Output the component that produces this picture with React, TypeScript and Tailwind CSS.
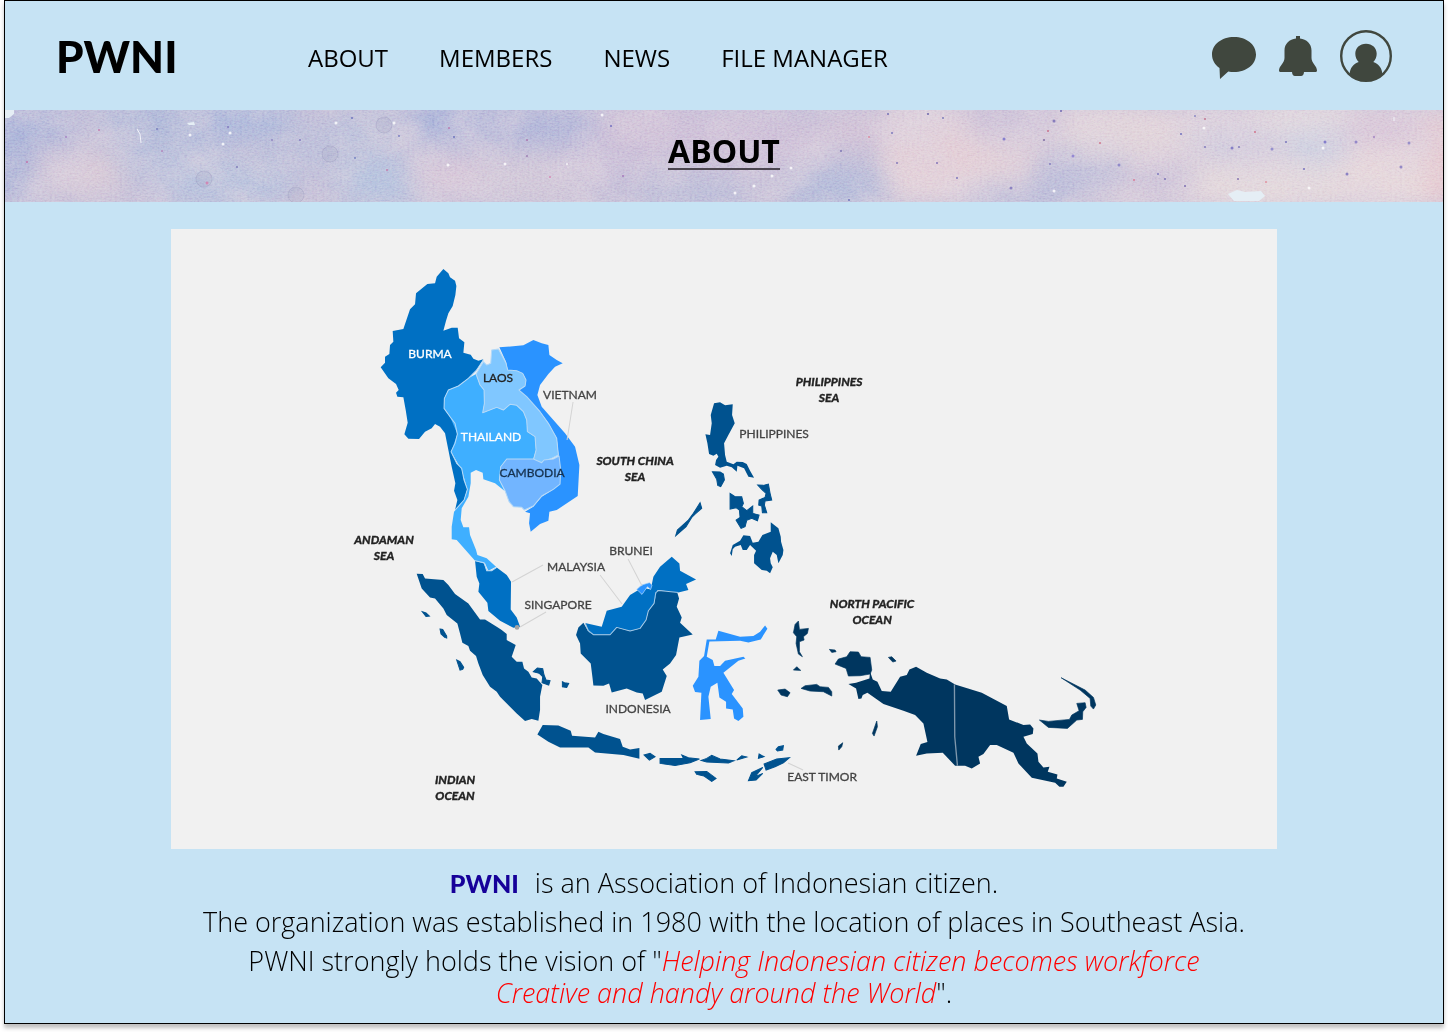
const labels: [string, number, number, string][] = [
  ['BURMA', 430, 358, '#ffffff'],
  ['LAOS', 498, 382, '#222222'],
  ['VIETNAM', 570, 399, '#444444'],
  ['THAILAND', 491, 441, '#ffffff'],
  ['CAMBODIA', 532, 477, '#16324f'],
  ['PHILIPPINES', 774, 438, '#444444'],
  ['BRUNEI', 631, 555, '#444444'],
  ['MALAYSIA', 576, 571, '#444444'],
  ['SINGAPORE', 558, 609, '#444444'],
  ['INDONESIA', 638, 713, '#444444'],
  ['EAST TIMOR', 822, 781, '#444444'],
];

const seas: [string, string, number, number][] = [
  ['PHILIPPINES', 'SEA', 829, 386],
  ['SOUTH CHINA', 'SEA', 635, 465],
  ['ANDAMAN', 'SEA', 384, 544],
  ['NORTH PACIFIC', 'OCEAN', 872, 608],
  ['INDIAN', 'OCEAN', 455, 784],
];

function SoutheastAsiaMap() {
  return (
    <svg viewBox="171 229 1106 620" className="mx-auto block h-auto w-10/13 bg-[#f1f1f1]" role="img" aria-label="Map of Southeast Asia">
      <g transform="translate(340 250) scale(.33333)" stroke="#b5d9f7" strokeWidth="3" strokeLinejoin="round">
        <path fill="#2a93ff" stroke="none" d="M478 292L550 286L580 270L605 280L625 285L628 315L650 330L668 340L645 350L625 372L600 405L592 435L605 470L640 510L675 550L705 590L718 645L713 738L650 780L628 785L625 812L600 822L572 845L567 820L570 790L555 785L580 770L605 740L640 718L660 700L658 640L655 610L650 565L625 520L600 485L537 420L555 408L558 390L548 370L503 360L498 335Z" />
        <path fill="#0070c3" stroke="none" d="M310 57L325 70L330 82L345 92L349 108L346 135L338 168L325 190L318 212L310 242L335 233L353 233L357 265L373 277L370 308L392 314L400 326L415 332L430 328L410 360L385 385L355 408L325 420L313 445L312 475L330 500L345 520L352 552L345 580L333 605L350 640L365 655L372 690L382 718L372 750L345 780L352 750L342 722L346 700L335 650L325 600L315 550L300 530L285 522L275 535L255 545L237 567L205 566L193 553L203 518L197 480L190 442L172 440L168 428L176 420L168 402L145 385L122 352L135 338L135 320L148 312L150 285L160 275L158 243L190 237L210 178L225 163L228 130L262 102L285 100L290 80Z" />
        <path fill="#3fafff" stroke="none" d="M408 372L420 405L432 420L433 460L428 488L450 480L470 472L490 480L510 463L530 466L550 485L560 510L562 545L585 560L588 600L580 627L500 627L482 650L478 690L493 722L465 700L430 688L428 668L408 660L392 668L392 700L385 740L365 775L362 810L370 832L387 832L390 855L408 900L412 915L440 925L468 950L445 962L435 940L405 932L350 870L335 868L335 830L342 785L372 750L382 718L365 660L333 605L352 552L330 500L312 475L313 445L325 420L355 408L385 385Z" />
        <path fill="#80c7ff" d="M408 372L430 335L440 345L452 340L455 300L475 297L485 315L498 340L503 360L530 362L548 370L558 390L555 408L537 420L560 440L600 485L625 520L650 565L655 615L635 625L612 632L605 638L580 630L588 600L585 560L562 545L560 510L550 485L530 466L510 463L490 480L470 472L428 488L433 460L432 420L420 405Z" />
        <path fill="#72b5ff" d="M500 627L580 627L605 638L612 630L640 627L657 618L662 660L660 702L640 718L605 738L580 768L553 780L545 772L520 770L507 755L495 722L478 690L482 650Z" />
        <path fill="none" d="M430 330L408 362L385 385L355 408L325 420L313 445L312 475L330 500L345 520L352 552L345 580L333 605L350 640L365 655L372 690L382 718L372 750L345 780" />
      </g>
      <g transform="translate(340 530) scale(.33333)" fill="#00528f">
        <path fill="#0070c3" d="M405 92L432 100L440 122L455 122L470 112L500 135L513 155L512 238L530 262L540 290L520 293L480 272L445 243L442 218L415 185L418 160L410 140Z" />
        <path fill="none" stroke="#b5d9f7" strokeWidth="3" d="M405 92L432 98L440 122L455 122L470 112" />
        <circle cx="531" cy="292" r="7" fill="#a3a3a3" />
        <path d="M230 131L248 132L255 145L310 150L325 165L345 192L385 220L420 268L435 268L470 290L485 300L500 312L500 330L527 345L515 380L530 395L547 395L552 415L565 425L575 442L590 445L607 465L600 500L600 540L595 572L575 567L555 573L530 550L480 500L470 485L450 470L428 435L415 400L408 378L390 362L385 348L367 338L360 310L352 280L320 255L310 235L285 205L270 202L245 175Z" />
        <path d="M247 245L258 249L268 258L258 259ZM300 297L308 298L320 318L320 324L314 322L303 312ZM350 390L360 395L371 412L368 418L360 420ZM580 425L592 414L608 416L612 435L618 450L630 452L626 465L606 458L608 440L598 430ZM667 455L673 458L686 460L680 472L667 470Z" stroke="#00528f" strokeWidth="3" />
      </g>
      <g transform="translate(560 380) scale(.33333)" fill="#00528f">
        <path d="M462 70L480 67L495 76L518 73L516 105L524 130L505 165L492 190L495 225L500 245L520 253L530 245L548 246L560 252L570 272L582 293L565 290L552 265L532 257L530 275L515 262L500 257L480 263L465 255L468 240L475 230L470 221L460 227L447 222L442 190L436 163L450 165L455 130L452 105Z" />
        <path d="M457 275L480 276L490 282L493 300L482 320L473 316L470 298ZM420 368L425 385L405 402L395 412L378 440L347 467L352 450L385 420L400 400ZM510 340L525 350L545 350L550 370L545 380L560 392L578 378L578 400L597 405L592 422L575 415L560 421L555 440L543 445L535 432L528 420L540 412L538 390L528 383L510 387ZM593 315L610 316L625 312L630 340L635 360L615 363L613 375L620 398L607 398L605 378L596 375L597 360L615 352L618 340L605 328Z" stroke="#00528f" strokeWidth="3" />
        <path d="M632 427L655 445L662 470L663 485L670 510L668 525L655 550L650 525L638 515L630 535L632 550L638 562L630 580L620 572L605 570L582 550L582 525L588 512L570 495L560 510L548 510L542 495L525 500L518 508L515 528L510 520L518 495L540 482L550 466L570 468L578 488L595 485L607 465L632 455Z" />
      </g>
      <g transform="translate(560 540) scale(.33333)" fill="#00528f">
        <path d="M-68 583L-52 555L-5 556L32 572L36 587L105 592L115 575L130 582L180 597L188 620L210 628L238 624L238 656L190 645L105 637L85 622L0 622L-35 605Z" />
        <path d="M70 248L85 275L100 284L150 284L170 262L210 273L240 265L258 240L265 212L282 190L290 152L350 152L357 175L350 200L365 232L360 248L398 283L358 292L348 345L330 370L308 388L320 408L305 455L255 480L248 460L230 457L200 445L155 457L147 430L130 437L100 436L97 410L92 370L62 340L60 310L48 285L55 262Z" />
        <path fill="#0070c3" d="M75 249L125 260L140 212L185 200L210 165L235 150L245 163L258 145L272 148L280 110L300 80L335 50L358 70L360 92L408 118L378 132L385 150L355 157L292 150L282 190L265 212L258 240L240 265L210 273L170 262L150 284L100 284L85 275Z" />
        <path fill="none" stroke="#a5c9e6" strokeWidth="3" strokeLinejoin="round" d="M75 249L85 272L100 284L150 284L170 262L210 273L240 265L258 240L265 212L282 190L287 158L296 151L355 157" />
        <path fill="#2a93ff" stroke="#a5d1f7" strokeWidth="2" d="M230 148L245 135L268 128L276 135L272 148L262 140L246 163Z" />
        <path fill="#2a93ff" d="M440 298L467 298L475 272L540 290L580 288L600 275L615 256L622 266L602 298L565 307L540 302L448 304L440 350L458 360L463 378L480 378L495 362L550 350L556 355L535 362L490 398L522 450L515 462L548 505L550 530L535 543L522 535L518 508L498 505L498 485L478 472L472 428L452 440L445 470L452 537L420 540L424 458L405 456L398 437L415 410L418 362L432 348Z" />
        <path d="M252 645L270 640L285 650L268 660ZM300 655L370 655L365 645L385 653L418 657L390 668L345 676L300 670ZM423 661L440 655L455 646L480 657L522 662L505 669L440 666ZM530 660L545 647L560 651ZM597 642L612 650L595 655ZM648 628L655 620L670 617L668 630L652 633ZM612 672L650 657L688 653L670 668L645 680L618 690ZM565 722L575 698L608 682L585 710L608 700L588 720ZM405 695L440 694L468 715L455 724L432 708L410 703Z" stroke="#00528f" strokeWidth="3" />
      </g>
      <g transform="translate(780 590) scale(.33333)" fill="#00365f">
        <path d="M205 282L228 278L268 265L270 245L278 268L292 275L305 303L332 305L360 260L380 255L388 238L408 230L440 248L480 265L500 268L525 283L605 308L680 348L687 388L730 405L750 403L760 415L758 432L730 440L740 460L772 490L775 515L790 532L808 530L803 545L832 553L830 565L860 575L850 590L838 590L825 578L755 563L715 520L700 488L650 465L630 465L610 492L595 500L600 520L575 535L555 527L525 527L488 488L440 490L408 497L422 462L442 456L430 400L405 375L370 362L310 342L262 308L248 315L244 325L235 327L228 295Z" />
        <path d="M165 222L175 207L200 200L210 185L235 186L243 200L270 202L275 240L270 252L240 257L205 258L198 235ZM55 93L58 118L85 115L82 130L70 140L72 150L58 155L58 185L67 200L55 192L48 160L50 140L40 128L45 103ZM148 178L165 180L168 185L155 187ZM40 240L50 230L62 241ZM63 295L75 287L110 283L120 290L145 292L155 305L155 318L130 305L90 303ZM-7 300L15 297L30 308L22 320L3 315ZM325 202L335 200L348 213L338 216ZM290 393L292 410L282 438L277 430ZM188 458L185 470L176 480L175 468ZM778 390L805 394L868 388L875 375L897 362L890 340L915 338L918 352L908 365L907 388L890 390L862 415L805 412ZM843 263L915 300L940 322L947 345L940 357L932 348L930 325L900 300Z" stroke="#00365f" strokeWidth="2" />
        <path fill="none" stroke="#7f98ad" strokeWidth="4" d="M523 283L524 440L532 527" />
      </g>
      <path fill="none" stroke="#d3d3d3" d="M573 402L567 440M543 565L512 582M600 575L622 604M628 559L642 586M546 612L520 627M788 763L803 770" />
      <g className="font-[Lato,sans-serif] text-[12px]" textAnchor="middle">
        {labels.map(([name, x, y, color]) => (
          <text key={name} x={x} y={y} fill={color} stroke={color} strokeWidth=".3">{name}</text>
        ))}
      </g>
      <g className="font-[Lato,sans-serif] text-[12px] font-bold italic" textAnchor="middle" fill="#222222" stroke="#222222" strokeWidth=".4">
        {seas.map(([first, second, x, y]) => (
          <text key={first}>
            <tspan x={x} y={y}>{first}</tspan>
            <tspan x={x} y={y + 16}>{second}</tspan>
          </text>
        ))}
      </g>
    </svg>
  );
}

const washes: [number, number, number, number, string][] = [
  [10, 20, 60, 30, '#adb6da'], [8, 65, 16, 30, '#a5b1d8'], [80, 62, 50, 20, '#dccdd8'], [50, 50, 30, 18, '#d0c7da'],
  [150, 10, 60, 26, '#b2bbda'], [170, 50, 60, 24, '#bbc1dc'], [240, 8, 50, 22, '#aebadc'], [220, 75, 70, 22, '#bac4de'],
  [310, 40, 60, 25, '#c0c2db'], [380, 72, 50, 26, '#b9c5df'], [360, 20, 40, 20, '#bec3dc'], [455, 14, 55, 20, '#a5b2da'],
  [450, 66, 50, 22, '#d9cada'], [520, 16, 80, 18, '#b3b8da'], [530, 70, 60, 28, '#d3cada'], [600, 50, 45, 24, '#c9c0d9'],
  [650, 20, 60, 26, '#cfc1d8'], [690, 82, 60, 14, '#bec0da'], [740, 30, 80, 30, '#d0c3d9'], [830, 80, 50, 22, '#b7bedb'],
  [850, 20, 40, 16, '#d6c6d8'], [930, 45, 50, 26, '#e3cfd7'], [915, 10, 40, 14, '#ddd0dc'], [1010, 10, 50, 20, '#cac0d8'],
  [1020, 50, 40, 18, '#e0cfd8'], [1075, 60, 50, 26, '#c3c2db'], [1020, 88, 60, 12, '#b8bcda'], [1110, 25, 60, 22, '#e1d5db'],
  [1160, 70, 40, 18, '#ccc4da'], [1210, 30, 40, 24, '#dad2de'], [1270, 75, 90, 20, '#e4dadd'], [1240, 36, 40, 14, '#ccc9de'],
  [1310, 36, 34, 18, '#ccd0e2'], [1300, 8, 60, 14, '#e2dadf'], [1380, 20, 50, 12, '#d6c5d9'], [1390, 70, 60, 22, '#e7d9dc'],
  [1440, 50, 20, 50, '#e7cbd1'],
];

const dots: [number, number, number, string][] = [
  [331, 13, 2, '#fff'], [389, 13, 2, '#fff'], [218, 34, 2, '#fff'], [185, 25, 2, '#fff'], [225, 23, 2, '#fff'],
  [443, 55, 2, '#fff'], [500, 54, 2, '#fff'], [562, 54, 1, '#fff'], [597, 5, 2, '#fff'], [749, 76, 2, '#fff'],
  [767, 66, 2, '#fff'], [786, 58, 2, '#fff'], [730, 83, 2, '#fff'], [1199, 18, 2, '#fff'], [1318, 38, 2, '#fff'],
  [1304, 78, 2, '#fff'], [1049, 81, 2, '#fff'], [94, 20, 1, '#c46fa8'], [202, 73, 2, '#d57bad'], [157, 41, 1, '#b27bb6'],
  [22, 52, 1, '#c667a2'], [61, 27, 1, '#a27ac0'], [152, 19, 1, '#6d74b8'], [223, 17, 1, '#766fba'], [267, 30, 1, '#8678bd'],
  [295, 30, 1, '#776cba'], [232, 57, 1, '#716db1'], [347, 8, 1, '#5d66b7'], [394, 26, 1, '#6b72bd'], [449, 27, 1, '#5561b5'],
  [350, 48, 1, '#6574bc'], [382, 60, 1, '#c36fa3'], [522, 30, 1, '#a96aa5'], [522, 46, 1, '#926fa9'], [606, 16, 1, '#5a5dba'],
  [618, 66, 1, '#9a66b6'], [545, 67, 1, '#d67ab1'], [444, 18, 1, '#bb6da8'], [883, 4, 1, '#5e5bad'], [923, 4, 1, '#514e9f'],
  [938, 8, 1, '#6668b2'], [887, 23, 1, '#6665b5'], [864, 27, 1, '#df7f96'], [836, 41, 1, '#6c64ad'], [892, 53, 1, '#6e64b1'],
  [932, 53, 1, '#6d5eb0'], [952, 68, 1, '#675fb3'], [844, 90, 1, '#5c64b7'], [999, 29, 2, '#706acb'], [1049, 11, 2, '#7469b4'],
  [1056, 1, 1, '#5551a8'], [1043, 21, 1, '#c7617c'], [1039, 30, 1, '#6a5795'], [1095, 33, 1, '#cd667c'], [1068, 46, 2, '#8478cf'],
  [1045, 54, 1, '#776eb9'], [1114, 55, 2, '#817ac6'], [1006, 78, 2, '#7a70ba'], [1153, 64, 1, '#6c68b9'], [1160, 69, 1, '#685ead'],
  [1180, 76, 1, '#6957a7'], [1176, 24, 1, '#5458b5'], [1200, 9, 1, '#bc627c'], [1190, 6, 1, '#7976bd'], [1200, 37, 1, '#6d67b4'],
  [1227, 38, 2, '#726ac1'], [1234, 37, 1, '#7169b3'], [1250, 22, 1, '#d05e77'], [1267, 39, 2, '#8580c9'], [1281, 32, 1, '#6564b6'],
  [1320, 32, 2, '#7169c6'], [1299, 59, 1, '#5f5bb6'], [1351, 32, 2, '#8275c4'], [1342, 64, 2, '#746bbb'], [1369, 27, 1, '#9470bb'],
  [1404, 33, 2, '#867fc4'], [1396, 57, 2, '#7f76c0'], [1233, 69, 1, '#705ca5'], [1261, 72, 1, '#e18290'], [1129, 70, 1, '#d96c87'],
];

function WatercolourWash() {
  return (
    <svg viewBox="0 0 1438 92" preserveAspectRatio="none" className="absolute inset-0 h-full w-full" aria-hidden="true">
      <defs>
        <filter id="soft" x="-50%" y="-50%" width="200%" height="200%" colorInterpolationFilters="sRGB">
          <feGaussianBlur stdDeviation="13" />
        </filter>
        <filter id="cloud" x="0" y="0" width="100%" height="100%" colorInterpolationFilters="sRGB">
          <feTurbulence type="fractalNoise" baseFrequency="0.018 0.022" numOctaves="5" seed="7" />
          <feColorMatrix type="matrix" values="0 0 0 0 0.88  0 0 0 0 0.84  0 0 0 0 0.88  2.4 0 0 0 -0.95" />
        </filter>
        <filter id="grain" x="0" y="0" width="100%" height="100%" colorInterpolationFilters="sRGB">
          <feTurbulence type="fractalNoise" baseFrequency="0.4 0.6" numOctaves="2" seed="3" />
          <feColorMatrix type="saturate" values="0.3" />
          <feComponentTransfer>
            <feFuncA type="linear" slope="0" intercept="1" />
          </feComponentTransfer>
        </filter>
      </defs>
      <rect width="1438" height="92" fill="#c8c3da" />
      <rect x="880" width="558" height="92" fill="#e5d6dd" filter="url(#soft)" />
      <g filter="url(#soft)">
        {washes.map(([cx, cy, rx, ry, color]) => (
          <ellipse key={`${cx}-${cy}`} cx={cx} cy={cy} rx={rx} ry={ry} fill={color} />
        ))}
      </g>
      <rect width="1438" height="92" filter="url(#cloud)" opacity=".5" />
      <rect width="1438" height="92" filter="url(#grain)" opacity=".6" style={{ mixBlendMode: 'soft-light' }} />
      <g fill="#9b98bf" fillOpacity=".15" stroke="#8986af" strokeOpacity=".25">
        <circle cx="379" cy="15" r="8" />
        <circle cx="325" cy="44" r="8" />
        <circle cx="199" cy="69" r="8" />
        <circle cx="291" cy="85" r="8" />
      </g>
      <path d="M0 0H9V4L4 8H0ZM182 13L189 12L190 15L184 15ZM1223 84L1232 80L1240 82L1256 81L1260 86L1254 91H1229Z" fill="#e5eef5" />
      <path d="M132 19L135 24L136 33M1389 7V11" fill="none" stroke="#f2f3fa" />
      {dots.map(([cx, cy, r, color]) => (
        <circle key={`${cx}-${cy}`} cx={cx} cy={cy} r={r === 1 ? 1 : 1.5} fill={color} opacity=".8" />
      ))}
    </svg>
  );
}

function ChatIcon() {
  return (
    <svg viewBox="0 0 44 42" className="h-[42px] w-11" fill="currentColor" aria-hidden="true">
      <path d="M22 0C34.500 0 44 7.500 44 17.500S34.500 35 22 35c-2 0-3.900-.2-5.700-.6L8 42 7.500 31C2.800 27.800 0 23 0 17.500 0 7.500 9.500 0 22 0Z" />
    </svg>
  );
}

function BellIcon() {
  return (
    <svg viewBox="0 0 38 40" className="h-10 w-[38px]" fill="currentColor" aria-hidden="true">
      <path d="M17 0h4v2.500c6.500 .5 11.500 5.300 11.500 12V22c0 5 5.500 8 5.500 12.500 0 .9-.5 1.500-1.500 1.500H25c-.2 2.700-1.200 4-3 4h-6c-1.800 0-2.800-1.300-3-4H1.500C.5 36 0 35.400 0 34.500 0 30 5.500 27 5.500 22v-7.500C5.500 7.800 10.500 3 17 2.500Z" />
    </svg>
  );
}

function ProfileIcon() {
  return (
    <svg viewBox="0 0 52 52" className="size-[52px]" fill="currentColor" aria-hidden="true">
      <circle cx="26" cy="26" r="24.800" fill="none" stroke="currentColor" strokeWidth="2.400" />
      <path d="M26 13.800c6.200 0 10.700 4.200 10.700 10 0 3.200-1.200 6.100-3.400 8.200C38.500 33.500 42 38 42.500 44.500 38 49 32.500 51 26 51S14 49 9.500 44.500C10 38 13.500 33.500 18.700 32c-2.200-2.100-3.400-5-3.400-8.200 0-5.800 4.500-10 10.700-10Z" />
    </svg>
  );
}

export default function App() {
  return (
    <div className="bg-white px-1 pb-2">
      <div className="border border-black bg-[#c6e3f4] text-black shadow-[0_4px_4px_rgba(0,0,0,0.25)]">
        <header className="flex h-[109px] items-center px-[51px]">
          <a href="#home" className="w-[252px] font-[Lato,sans-serif] text-[44px] leading-none font-black">
            PWNI
          </a>
          <nav className="flex flex-1 gap-[51px] pt-1 font-['Open_Sans',sans-serif] text-[24px] leading-8 whitespace-nowrap">
            <a href="#about">ABOUT</a>
            <a href="#members">MEMBERS</a>
            <a href="#news">NEWS</a>
            <a href="#files">FILE MANAGER</a>
          </nav>
          <div className="flex items-center gap-[23px] text-[#40473e]">
            <button type="button" aria-label="Messages" className="pt-1"><ChatIcon /></button>
            <button type="button" aria-label="Notifications"><BellIcon /></button>
            <button type="button" aria-label="Profile"><ProfileIcon /></button>
          </div>
        </header>
        <main>
          <div className="relative flex h-[92px] items-center justify-center pb-2">
            <WatercolourWash />
            <h1 className="relative border-b-2 border-[#4c4650] font-['Open_Sans',sans-serif] text-[32px] leading-[34px] font-bold">
              ABOUT
            </h1>
          </div>
          <div className="pt-[27px]">
            <SoutheastAsiaMap />
          </div>
          <div className="flex flex-col gap-[7px] pt-[18px] pb-[14px] text-center font-['Open_Sans',sans-serif] text-[27px] leading-8 font-light">
            <p>
              <span className="mr-4 font-[Lato,sans-serif] text-[25px] font-black text-[#160099]">PWNI</span>
              is an Association of Indonesian citizen.
            </p>
            <p>The organization was established in 1980 with the location of places in Southeast Asia.</p>
            <p>
              PWNI strongly holds the vision of "
              <em className="text-[#ff0000]">
                Helping Indonesian citizen becomes workforce
                <br />
                Creative and handy around the World
              </em>
              ".
            </p>
          </div>
        </main>
      </div>
    </div>
  );
}
